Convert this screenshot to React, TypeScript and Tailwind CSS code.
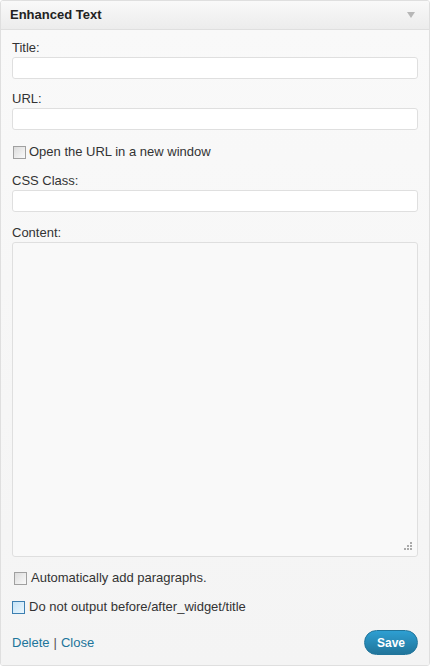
export default function App() {
  const inputCls =
    "block w-full h-[22px] bg-white border border-[#dfdfdf] rounded-[3px] outline-none";
  return (
    <div className="w-[432px] h-[668px] bg-white font-['Liberation_Sans',Arial,sans-serif] text-[13px] text-[#333]">
      <div className="w-[430px] h-[666px] border border-[#dfdfdf] rounded-t-[3px] rounded-b-[3px] flex flex-col overflow-hidden">
        {/* header */}
        <div className="h-[29px] shrink-0 flex items-center justify-between pl-[9px] pr-[14px] bg-gradient-to-b from-[#f9f9f9] to-[#ececec] border-b border-[#dfdfdf]">
          <span className="font-bold text-[#222] text-[13px]">Enhanced Text</span>
          <svg width="8" height="6" viewBox="0 0 8 6">
            <path d="M0 0h8L4 6z" fill="#b7b7b7" />
          </svg>
        </div>

        {/* body */}
        <div className="flex-1 flex flex-col px-[11px] bg-gradient-to-b from-[#f9f9f9] to-[#f4f4f4]">
          <label className="mt-[10px] leading-[16px]">Title:</label>
          <input className={`${inputCls} mt-[1px]`} />

          <label className="mt-[12px] leading-[16px]">URL:</label>
          <input className={`${inputCls} mt-[1px]`} />

          <label className="mt-[14px] flex items-center gap-[3px] leading-[16px]">
            <span className="w-[13px] h-[13px] border border-[#a0a0a0] bg-gradient-to-br from-[#dcdcdc] to-[#fafafa] inline-block ml-[1px]" />
            Open the URL in a new window
          </label>

          <label className="mt-[13px] leading-[16px]">CSS Class:</label>
          <input className={`${inputCls} mt-[1px]`} />

          <label className="mt-[13px] leading-[16px]">Content:</label>
          <div className="relative mt-[1px] h-[315px] bg-[#f9f9f9] border border-[#dfdfdf] rounded-[3px]">
            <svg className="absolute right-[4px] bottom-[5px]" width="9" height="9" viewBox="0 0 9 9">
              <g fill="#aaa">
                <rect x="6" y="0" width="2" height="2" />
                <rect x="3" y="3" width="2" height="2" />
                <rect x="6" y="3" width="2" height="2" />
                <rect x="0" y="6" width="2" height="2" />
                <rect x="3" y="6" width="2" height="2" />
                <rect x="6" y="6" width="2" height="2" />
              </g>
            </svg>
          </div>

          <label className="mt-[13px] flex items-center gap-[4px] leading-[16px]">
            <span className="w-[13px] h-[13px] border border-[#a0a0a0] bg-gradient-to-br from-[#dcdcdc] to-[#fafafa] inline-block ml-[2px]" />
            Automatically add paragraphs.
          </label>

          <label className="mt-[13px] flex items-center gap-[4px] leading-[16px]">
            <span className="w-[13px] h-[13px] border border-[#3c7fb1] bg-gradient-to-br from-[#c5e3f7] to-[#eaf6fd] inline-block" />
            Do not output before/after_widget/title
          </label>

          <div className="mt-[15px] flex items-center justify-between">
            <div className="flex items-center gap-[4px]">
              <span className="text-[#21759b]">Delete</span>
              <span className="text-[#555]">|</span>
              <span className="text-[#21759b]">Close</span>
            </div>
            <button className="h-[25px] px-[12px] rounded-full bg-gradient-to-b from-[#2e9fd2] to-[#21759b] border border-[#21759b] text-white font-bold text-[12px] font-['Liberation_Sans',Arial,sans-serif]">
              Save
            </button>
          </div>
        </div>
      </div>
    </div>
  );
}
